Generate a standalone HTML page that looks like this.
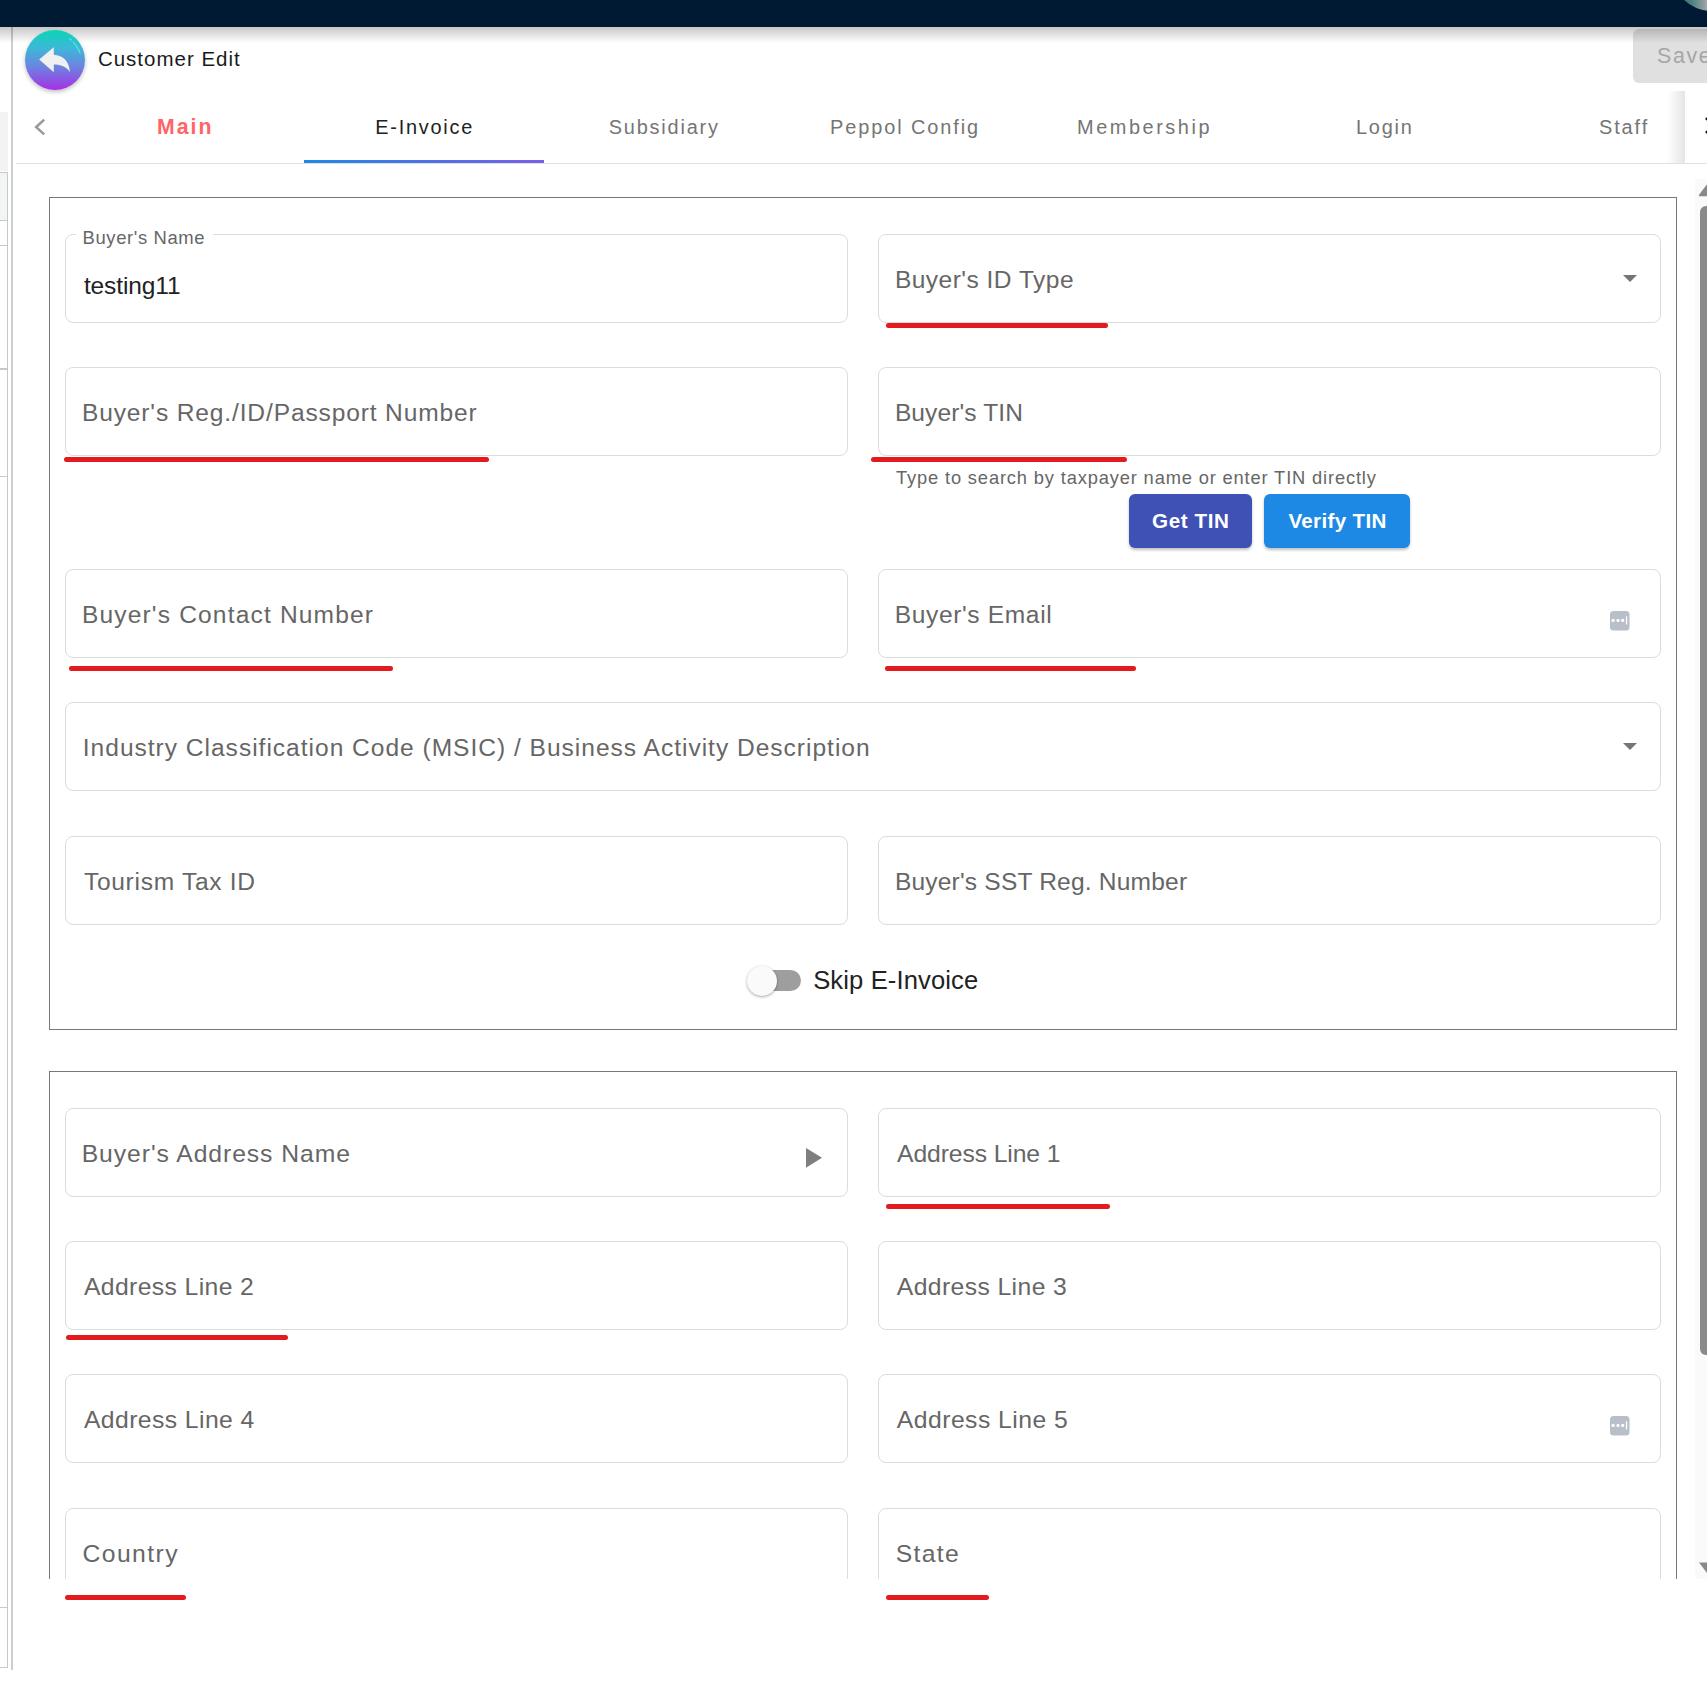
<!DOCTYPE html>
<html><head><meta charset="utf-8"><title>Customer Edit</title>
<style>
html,body{margin:0;padding:0;}
body{width:1707px;height:1707px;position:relative;overflow:hidden;background:#fff;font-family:"Liberation Sans",sans-serif;}
.a{position:absolute;}
.t{position:absolute;white-space:nowrap;}
</style></head><body>
<div class="a" style="left:0px;top:27px;width:11px;height:1650px;background:#fff;"></div><div class="a" style="left:0px;top:112px;width:8px;height:59px;background:#f3f3f3;"></div><div class="a" style="left:0px;top:172px;width:8px;height:49px;background:#f3f5f5;border-right:1px solid #c3c9cf;border-top:1px solid #c3c9cf;border-bottom:1px solid #c3c9cf;box-sizing:border-box;"></div><div class="a" style="left:0px;top:245px;width:8px;height:1px;background:#c3c9cf;"></div><div class="a" style="left:0px;top:368px;width:8px;height:2px;background:#c3c9cf;"></div><div class="a" style="left:0px;top:476px;width:8px;height:1px;background:#c3c9cf;"></div><div class="a" style="left:7px;top:220px;width:1px;height:1448px;background:#c3c9cf;"></div><div class="a" style="left:0px;top:1607px;width:8px;height:1px;background:#c3c9cf;"></div><div class="a" style="left:0px;top:1667px;width:8px;height:1px;background:#c3c9cf;"></div><div class="a" style="left:11px;top:27px;width:2px;height:1643px;background:#cdcdcd;"></div><div class="a" style="left:0px;top:0px;width:1707px;height:27px;background:#011a34;"></div><div class="a" style="left:1671px;top:-71px;width:82px;height:82px;border-radius:50%;background:linear-gradient(90deg,#2f5f62 0%,#4f7f80 25%,#6a8f8e 32%,#8e9a9e 40%,#a8b0b8 45%,#3f5a55 50%,#b0a89c 56%,#c8c0b0 100%);"></div><div class="a" style="left:0px;top:27px;width:1707px;height:16px;background:linear-gradient(rgba(0,0,0,0.22),rgba(0,0,0,0));z-index:5;"></div><div class="a" style="left:1633px;top:29px;width:90px;height:54px;background:#e0e0e0;border-radius:6px;"></div><div class="t" style="left:1657.0px;top:46px;font-size:21.37px;line-height:21.37px;letter-spacing:1.667px;color:#a6a6a6;">Save</div><div class="a" style="left:25px;top:30px;width:60px;height:60px;border-radius:50%;background:linear-gradient(#0bd5b5,#3cb8d8 30%,#6a86e0 60%,#a72fe6);box-shadow:0 2px 4px rgba(0,0,0,0.25);z-index:6;"></div><svg class="a" style="left:25px;top:30px;z-index:7" width="60" height="60" viewBox="0 0 60 60"><path d="M14.2 29.5 L28.8 17.3 L28.8 24.7 C37 25.2 44 30 45 42 C41 36.5 36 34.6 28.8 34.6 L28.8 42.3 Z" fill="#f0f0f0"/><path d="M44.3 8.2 C48.5 11.5 53 17 55.2 23.4" stroke="#52e6ea" stroke-width="1.2" fill="none" stroke-dasharray="3.5 1.5 30 0"/></svg><div class="t" style="left:97.9px;top:49px;font-size:20.49px;line-height:20.49px;letter-spacing:1.008px;color:#1a1a1a;">Customer Edit</div><svg class="a" style="left:25px;top:106px" width="30" height="40" viewBox="0 0 30 40"><path d="M19.2 13.6 L11.2 21.1 L19.2 28.4" stroke="#9a9a9a" stroke-width="2.6" fill="none"/></svg><div class="t" style="left:156.9px;top:116px;font-size:21.22px;line-height:21.22px;letter-spacing:2.100px;color:#ff6467;font-weight:700;">Main</div><div class="t" style="left:375.3px;top:118px;font-size:19.91px;line-height:19.91px;letter-spacing:1.750px;color:#222;">E-Invoice</div><div class="t" style="left:608.7px;top:118px;font-size:19.91px;line-height:19.91px;letter-spacing:1.811px;color:#757575;">Subsidiary</div><div class="t" style="left:830.0px;top:118px;font-size:19.91px;line-height:19.91px;letter-spacing:1.917px;color:#757575;">Peppol Config</div><div class="t" style="left:1077.0px;top:118px;font-size:19.91px;line-height:19.91px;letter-spacing:2.556px;color:#757575;">Membership</div><div class="t" style="left:1356.0px;top:118px;font-size:19.91px;line-height:19.91px;letter-spacing:1.750px;color:#757575;">Login</div><div class="t" style="left:1599.0px;top:118px;font-size:19.91px;line-height:19.91px;letter-spacing:1.900px;color:#757575;">Staff</div><div class="a" style="left:16px;top:163px;width:1691px;height:1px;background:#e0e0e0;"></div><div class="a" style="left:304px;top:160px;width:240px;height:3px;background:linear-gradient(90deg,#1e88e5,#7b5ee6);"></div><div class="a" style="left:1667px;top:91px;width:18px;height:72px;background:linear-gradient(90deg,rgba(0,0,0,0),rgba(0,0,0,0.10));"></div><div class="a" style="left:1685px;top:91px;width:22px;height:72px;background:#fff;"></div><svg class="a" style="left:1701px;top:110px" width="20" height="30" viewBox="0 0 20 30"><path d="M5 8 L13 15.5 L5 23" stroke="#111" stroke-width="2.8" fill="none"/></svg><div class="a" style="left:0;top:0;width:1707px;height:1579px;overflow:hidden;"><div class="a" style="left:49px;top:197px;width:1628px;height:833px;border:1px solid #777;box-sizing:border-box;"></div><div class="a" style="left:65px;top:234px;width:783px;height:89px;border:1px solid #dcdcdc;border-radius:8px;box-sizing:border-box;"></div><div class="a" style="left:76px;top:230px;width:137px;height:8px;background:#fff;"></div><div class="t" style="left:82.5px;top:229px;font-size:18.46px;line-height:18.46px;letter-spacing:0.627px;color:#666;">Buyer's Name</div><div class="t" style="left:83.9px;top:274px;font-size:24.5px;line-height:24.5px;letter-spacing:-0.113px;color:#222;">testing11</div><div class="a" style="left:878px;top:234px;width:783px;height:89px;border:1px solid #dcdcdc;border-radius:8px;box-sizing:border-box;background:#fff;"></div><div class="t" style="left:894.9px;top:268px;font-size:24.56px;line-height:24.56px;letter-spacing:0.471px;color:#666;">Buyer's ID Type</div><svg class="a" style="left:1620px;top:270px" width="20" height="16" viewBox="0 0 20 16"><path d="M3 5 L17 5 L10 12 Z" fill="#757575"/></svg><div class="a" style="left:65px;top:367px;width:783px;height:89px;border:1px solid #dcdcdc;border-radius:8px;box-sizing:border-box;background:#fff;"></div><div class="t" style="left:81.9px;top:401px;font-size:24.56px;line-height:24.56px;letter-spacing:0.863px;color:#666;">Buyer's Reg./ID/Passport Number</div><div class="a" style="left:878px;top:367px;width:783px;height:89px;border:1px solid #dcdcdc;border-radius:8px;box-sizing:border-box;background:#fff;"></div><div class="t" style="left:894.9px;top:401px;font-size:24.56px;line-height:24.56px;letter-spacing:0.100px;color:#666;">Buyer's TIN</div><div class="t" style="left:896.0px;top:469px;font-size:18.31px;line-height:18.31px;letter-spacing:0.846px;color:#666;">Type to search by taxpayer name or enter TIN directly</div><div class="a" style="left:1129px;top:494px;width:123px;height:54px;background:#3f51b5;border-radius:6px;box-shadow:0 2px 3px rgba(0,0,0,0.25);"></div><div class="t" style="left:1152.0px;top:511px;font-size:20.64px;line-height:20.64px;letter-spacing:0.583px;color:#fff;font-weight:700;">Get TIN</div><div class="a" style="left:1264px;top:494px;width:146px;height:54px;background:#1e88e5;border-radius:6px;box-shadow:0 2px 3px rgba(0,0,0,0.25);"></div><div class="t" style="left:1288.4px;top:511px;font-size:20.64px;line-height:20.64px;letter-spacing:0.322px;color:#fff;font-weight:700;">Verify TIN</div><div class="a" style="left:65px;top:569px;width:783px;height:89px;border:1px solid #dcdcdc;border-radius:8px;box-sizing:border-box;background:#fff;"></div><div class="t" style="left:81.9px;top:603px;font-size:24.56px;line-height:24.56px;letter-spacing:1.167px;color:#666;">Buyer's Contact Number</div><div class="a" style="left:878px;top:569px;width:783px;height:89px;border:1px solid #dcdcdc;border-radius:8px;box-sizing:border-box;background:#fff;"></div><div class="t" style="left:894.7px;top:603px;font-size:24.56px;line-height:24.56px;letter-spacing:0.642px;color:#666;">Buyer's Email</div><svg class="a" style="left:1608px;top:609px" width="24" height="24" viewBox="0 0 24 24"><rect x="2" y="2" width="19.5" height="19.5" rx="3.5" fill="#b8bfc9"/><circle cx="5.1" cy="11.4" r="1.6" fill="#fff"/><circle cx="10" cy="11.4" r="1.6" fill="#fff"/><circle cx="14.7" cy="11.4" r="1.6" fill="#fff"/><rect x="17.9" y="7.4" width="1.3" height="8" fill="#fff"/></svg><div class="a" style="left:65px;top:702px;width:1596px;height:89px;border:1px solid #dcdcdc;border-radius:8px;box-sizing:border-box;background:#fff;"></div><div class="t" style="left:82.8px;top:736px;font-size:24.56px;line-height:24.56px;letter-spacing:0.988px;color:#666;">Industry Classification Code (MSIC) / Business Activity Description</div><svg class="a" style="left:1620px;top:738px" width="20" height="16" viewBox="0 0 20 16"><path d="M3 5 L17 5 L10 12 Z" fill="#757575"/></svg><div class="a" style="left:65px;top:836px;width:783px;height:89px;border:1px solid #dcdcdc;border-radius:8px;box-sizing:border-box;background:#fff;"></div><div class="t" style="left:83.9px;top:870px;font-size:24.56px;line-height:24.56px;letter-spacing:0.715px;color:#666;">Tourism Tax ID</div><div class="a" style="left:878px;top:836px;width:783px;height:89px;border:1px solid #dcdcdc;border-radius:8px;box-sizing:border-box;background:#fff;"></div><div class="t" style="left:894.9px;top:870px;font-size:24.56px;line-height:24.56px;letter-spacing:0.191px;color:#666;">Buyer's SST Reg. Number</div><div class="a" style="left:755px;top:970px;width:46px;height:21px;background:#9e9e9e;border-radius:10.5px;"></div><div class="a" style="left:747px;top:966px;width:30px;height:30px;background:#fafafa;border-radius:50%;box-shadow:0 1px 3px rgba(0,0,0,0.35);"></div><div class="t" style="left:813.2px;top:968px;font-size:25.58px;line-height:25.58px;letter-spacing:0.115px;color:#222;">Skip E-Invoice</div><div class="a" style="left:49px;top:1071px;width:1628px;height:700px;border:1px solid #777;box-sizing:border-box;"></div><div class="a" style="left:65px;top:1108px;width:783px;height:89px;border:1px solid #dcdcdc;border-radius:8px;box-sizing:border-box;background:#fff;"></div><div class="t" style="left:81.7px;top:1142px;font-size:24.71px;line-height:24.71px;letter-spacing:0.932px;color:#666;">Buyer's Address Name</div><svg class="a" style="left:800px;top:1143px" width="30" height="30" viewBox="0 0 30 30"><path d="M6 4.9 L22 14.8 L6 24.8 Z" fill="#7f7f7f"/></svg><div class="a" style="left:878px;top:1108px;width:783px;height:89px;border:1px solid #dcdcdc;border-radius:8px;box-sizing:border-box;background:#fff;"></div><div class="t" style="left:897.1px;top:1142px;font-size:24.71px;line-height:24.71px;letter-spacing:-0.115px;color:#666;">Address Line 1</div><div class="a" style="left:65px;top:1241px;width:783px;height:89px;border:1px solid #dcdcdc;border-radius:8px;box-sizing:border-box;background:#fff;"></div><div class="t" style="left:83.9px;top:1275px;font-size:24.71px;line-height:24.71px;letter-spacing:0.392px;color:#666;">Address Line 2</div><div class="a" style="left:878px;top:1241px;width:783px;height:89px;border:1px solid #dcdcdc;border-radius:8px;box-sizing:border-box;background:#fff;"></div><div class="t" style="left:896.8px;top:1275px;font-size:24.71px;line-height:24.71px;letter-spacing:0.400px;color:#666;">Address Line 3</div><div class="a" style="left:65px;top:1374px;width:783px;height:89px;border:1px solid #dcdcdc;border-radius:8px;box-sizing:border-box;background:#fff;"></div><div class="t" style="left:83.9px;top:1408px;font-size:24.71px;line-height:24.71px;letter-spacing:0.431px;color:#666;">Address Line 4</div><div class="a" style="left:878px;top:1374px;width:783px;height:89px;border:1px solid #dcdcdc;border-radius:8px;box-sizing:border-box;background:#fff;"></div><div class="t" style="left:896.8px;top:1408px;font-size:24.71px;line-height:24.71px;letter-spacing:0.477px;color:#666;">Address Line 5</div><svg class="a" style="left:1608px;top:1414px" width="24" height="24" viewBox="0 0 24 24"><rect x="2" y="2" width="19.5" height="19.5" rx="3.5" fill="#b8bfc9"/><circle cx="5.1" cy="11.4" r="1.6" fill="#fff"/><circle cx="10" cy="11.4" r="1.6" fill="#fff"/><circle cx="14.7" cy="11.4" r="1.6" fill="#fff"/><rect x="17.9" y="7.4" width="1.3" height="8" fill="#fff"/></svg><div class="a" style="left:65px;top:1508px;width:783px;height:89px;border:1px solid #dcdcdc;border-radius:8px;box-sizing:border-box;background:#fff;"></div><div class="t" style="left:82.6px;top:1542px;font-size:24.71px;line-height:24.71px;letter-spacing:1.400px;color:#666;">Country</div><div class="a" style="left:878px;top:1508px;width:783px;height:89px;border:1px solid #dcdcdc;border-radius:8px;box-sizing:border-box;background:#fff;"></div><div class="t" style="left:895.8px;top:1542px;font-size:24.71px;line-height:24.71px;letter-spacing:1.325px;color:#666;">State</div></div><div class="a" style="left:1695px;top:179px;width:12px;height:1400px;background:#fafafa;"></div><svg class="a" style="left:1695px;top:179px" width="12" height="24" viewBox="0 0 12 24"><path d="M4.5 16.5 L12 6.5 L13 6.5 L13 16.5 Z" fill="#8a8a8a" stroke="#8a8a8a" stroke-width="1.5" stroke-linejoin="round"/></svg><div class="a" style="left:1700px;top:206px;width:12px;height:1149px;background:#8a8a8a;border-radius:6px;"></div><svg class="a" style="left:1695px;top:1555px" width="12" height="24" viewBox="0 0 12 24"><path d="M4 7.5 L12 7.5 L12 18 Z" fill="#8a8a8a"/></svg><div class="a" style="left:886px;top:323px;width:222px;height:4.5px;background:#e41b1e;border-radius:2.25px;"></div><div class="a" style="left:64px;top:457px;width:425px;height:5px;background:#e41b1e;border-radius:2.5px;"></div><div class="a" style="left:871px;top:457px;width:256px;height:5px;background:#e41b1e;border-radius:2.5px;"></div><div class="a" style="left:69px;top:666px;width:323.5px;height:4.5px;background:#e41b1e;border-radius:2.25px;"></div><div class="a" style="left:884.8px;top:666px;width:251.20000000000005px;height:4.5px;background:#e41b1e;border-radius:2.25px;"></div><div class="a" style="left:886px;top:1204px;width:224px;height:4.7000000000000455px;background:#e41b1e;border-radius:2.3500000000000227px;"></div><div class="a" style="left:65.7px;top:1335px;width:222.3px;height:5px;background:#e41b1e;border-radius:2.5px;"></div><div class="a" style="left:65.4px;top:1595px;width:120.6px;height:5px;background:#e41b1e;border-radius:2.5px;"></div><div class="a" style="left:886.2px;top:1595px;width:102.79999999999995px;height:5px;background:#e41b1e;border-radius:2.5px;"></div>
</body></html>
